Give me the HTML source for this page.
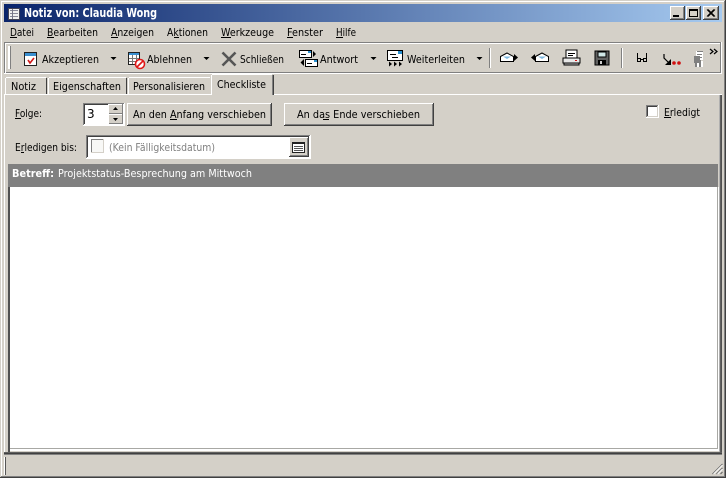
<!DOCTYPE html>
<html><head><meta charset="utf-8"><style>
html,body{margin:0;padding:0;background:#d4d0c8;width:726px;height:478px;overflow:hidden}
svg{display:block}
text{font-family:"DejaVu Sans","Liberation Sans",sans-serif;font-size:11px;fill:#000}
.c{shape-rendering:crispEdges}
</style></head><body>
<svg width="726" height="478" viewBox="0 0 726 478" xmlns="http://www.w3.org/2000/svg">
<defs><linearGradient id="g" x1="0" x2="1" y1="0" y2="0"><stop offset="0" stop-color="#0a246a"/><stop offset="1" stop-color="#a6caf0"/></linearGradient></defs>
<g class="c">
<rect width="726" height="478" fill="#d4d0c8"/>
<rect x="1" y="1" width="724" height="1" fill="#fff"/>
<rect x="1" y="1" width="1" height="476" fill="#fff"/>
<rect x="725" y="0" width="1" height="478" fill="#404040"/>
<rect x="724" y="1" width="1" height="476" fill="#808080"/>
<rect x="0" y="477" width="726" height="1" fill="#404040"/>
<rect x="1" y="476" width="724" height="1" fill="#808080"/>
<rect x="4" y="4" width="718" height="18" fill="url(#g)"/>
<!-- title icon -->
<rect x="8" y="8" width="12" height="12" fill="#f0f0f0"/>
<rect x="8" y="8" width="12" height="1" fill="#445"/><rect x="8" y="19" width="12" height="1" fill="#445"/>
<rect x="8" y="8" width="1" height="12" fill="#445"/><rect x="19" y="8" width="1" height="12" fill="#445"/>
<rect x="10" y="10" width="8" height="1" fill="#889"/><rect x="10" y="13" width="8" height="1" fill="#889"/><rect x="10" y="16" width="8" height="1" fill="#889"/>
<rect x="12" y="9" width="1" height="10" fill="#778"/>
<!-- window buttons -->
<rect x="670" y="6" width="15" height="14" fill="#404040"/><rect x="670" y="6" width="14" height="13" fill="#fff"/><rect x="671" y="7" width="13" height="12" fill="#808080"/><rect x="671" y="7" width="12" height="11" fill="#d4d0c8"/>
<rect x="673" y="15" width="6" height="2" fill="#000"/>
<rect x="686" y="6" width="15" height="14" fill="#404040"/><rect x="686" y="6" width="14" height="13" fill="#fff"/><rect x="687" y="7" width="13" height="12" fill="#808080"/><rect x="687" y="7" width="12" height="11" fill="#d4d0c8"/>
<rect x="689" y="9" width="9" height="2" fill="#000"/><rect x="689" y="9" width="1" height="8" fill="#000"/><rect x="697" y="9" width="1" height="8" fill="#000"/><rect x="689" y="16" width="9" height="1" fill="#000"/>
<rect x="703" y="6" width="16" height="14" fill="#404040"/><rect x="703" y="6" width="15" height="13" fill="#fff"/><rect x="704" y="7" width="14" height="12" fill="#808080"/><rect x="704" y="7" width="13" height="11" fill="#d4d0c8"/>
</g>
<path d="M707 9.500l7 7M708 9.500l7 7M714 9.500l-7 7M715 9.500l-7 7" stroke="#000" fill="none"/>
<text x="24" y="17" style="fill:#fff;font-size:12px;font-weight:bold" textLength="133" lengthAdjust="spacingAndGlyphs">Notiz von: Claudia Wong</text>

<!-- menu -->
<text x="10" y="36" textLength="24" lengthAdjust="spacingAndGlyphs">Datei</text>
<text x="47" y="36" textLength="51" lengthAdjust="spacingAndGlyphs">Bearbeiten</text>
<text x="111" y="36" textLength="43" lengthAdjust="spacingAndGlyphs">Anzeigen</text>
<text x="167" y="36" textLength="41" lengthAdjust="spacingAndGlyphs">Aktionen</text>
<text x="221" y="36" textLength="53" lengthAdjust="spacingAndGlyphs">Werkzeuge</text>
<text x="287" y="36" textLength="36" lengthAdjust="spacingAndGlyphs">Fenster</text>
<text x="336" y="36" textLength="20" lengthAdjust="spacingAndGlyphs">Hilfe</text>
<g class="c" fill="#000">
<rect x="10" y="37" width="7" height="1"/><rect x="47" y="37" width="7" height="1"/><rect x="111" y="37" width="7" height="1"/><rect x="174" y="37" width="5" height="1"/><rect x="221" y="37" width="10" height="1"/><rect x="287" y="37" width="6" height="1"/><rect x="336" y="37" width="7" height="1"/>
<!-- toolbar frame -->
<rect x="4" y="42" width="718" height="1" fill="#808080"/><rect x="4" y="43" width="718" height="1" fill="#fff"/>
<rect x="4" y="72" width="718" height="1" fill="#808080"/><rect x="4" y="73" width="718" height="1" fill="#fff"/>
<rect x="4" y="42" width="1" height="31" fill="#808080"/><rect x="5" y="43" width="1" height="30" fill="#fff"/>
<rect x="720" y="42" width="1" height="31" fill="#808080"/><rect x="721" y="42" width="1" height="32" fill="#fff"/>
<rect x="8" y="46" width="2" height="23" fill="#fff"/><rect x="10" y="46" width="1" height="23" fill="#808080"/>
<rect x="489" y="48" width="1" height="20" fill="#808080"/><rect x="490" y="48" width="1" height="20" fill="#fff"/>
<rect x="621" y="48" width="1" height="20" fill="#808080"/><rect x="622" y="48" width="1" height="20" fill="#fff"/>
<!-- accept icon -->
<rect x="24" y="52" width="13" height="14" fill="#fff"/><rect x="24" y="52" width="13" height="4" fill="#3a8fd0"/>
<rect x="24" y="52" width="13" height="1" fill="#222"/><rect x="24" y="65" width="13" height="1" fill="#222"/><rect x="24" y="52" width="1" height="14" fill="#222"/><rect x="36" y="52" width="1" height="14" fill="#222"/>
<!-- decline icon -->
<rect x="128" y="52" width="12" height="13" fill="#fff"/><rect x="128" y="52" width="12" height="3" fill="#3a8fd0"/>
<rect x="128" y="52" width="12" height="1" fill="#222"/><rect x="128" y="64" width="12" height="1" fill="#222"/><rect x="128" y="52" width="1" height="13" fill="#222"/><rect x="139" y="52" width="1" height="13" fill="#222"/>
<rect x="132" y="55" width="1" height="9" fill="#777"/><rect x="136" y="55" width="1" height="9" fill="#777"/><rect x="129" y="58" width="10" height="1" fill="#777"/><rect x="129" y="61" width="10" height="1" fill="#777"/>
</g>
<path d="M28 60l2 3 4-5" stroke="#d01818" stroke-width="1.600" fill="none"/>
<circle cx="140" cy="64" r="4.500" fill="#fff" stroke="#e01818" stroke-width="1.600"/><path d="M137 67l6-6" stroke="#e01818" stroke-width="1.600"/>
<text x="42" y="63" textLength="57" lengthAdjust="spacingAndGlyphs">Akzeptieren</text>
<text x="147" y="63" textLength="45" lengthAdjust="spacingAndGlyphs">Ablehnen</text>
<text x="240" y="63" textLength="44" lengthAdjust="spacingAndGlyphs">Schließen</text>
<text x="320" y="63" textLength="38" lengthAdjust="spacingAndGlyphs">Antwort</text>
<text x="407" y="63" textLength="58" lengthAdjust="spacingAndGlyphs">Weiterleiten</text>
<!-- arrows -->
<path d="M110.500 57h6l-3 3zM203.500 57h6l-3 3zM370.500 57h6l-3 3zM476.500 57h6l-3 3z" fill="#000"/>
<!-- X -->
<path d="M222.500 52.500l13 13M235.500 52.500l-13 13" stroke="#555" stroke-width="2.600" fill="none"/>
<!-- reply / forward icons -->
<g class="c">
<rect x="299.500" y="50.500" width="12" height="7" fill="#fff" stroke="#000"/><rect x="308" y="51" width="3" height="2" fill="#2a90d0"/><rect x="301" y="54" width="5" height="1" fill="#000"/>
<rect x="305.500" y="59.500" width="12" height="7" fill="#fff" stroke="#000"/><rect x="314" y="60" width="3" height="2" fill="#2a90d0"/><rect x="307" y="63" width="5" height="1" fill="#000"/>
<rect x="387.500" y="50.500" width="15" height="10" fill="#fff" stroke="#000"/><rect x="398" y="51" width="4" height="3" fill="#2a90d0"/><rect x="390" y="54" width="6" height="1" fill="#000"/><rect x="392" y="57" width="6" height="1" fill="#000"/>
</g>
<path d="M313 51l3 3-3 3zM304 59l-3.500 3.500 3.500 3.500zM389 61.500l3 2.500-3 2.500zM394 61.500l3 2.500-3 2.500zM399 61.500l3 2.500-3 2.500z" fill="#000"/>
<!-- open envelopes -->
<path d="M500.500 56.500L507 53l6.500 3.500v5h-13z" fill="#fff" stroke="#000"/><path d="M503 56.500h8l-4 2.500z" fill="#7fb9e0"/><path d="M514 54l4 3.500-4 3.500z" fill="#000"/>
<path d="M535.500 56.500L542 53l6.500 3.500v5h-13z" fill="#fff" stroke="#000"/><path d="M538 56.500h8l-4 2.500z" fill="#7fb9e0"/><path d="M535 54l-4 3.500 4 3.500z" fill="#000"/>
<!-- printer / floppy -->
<g class="c">
<rect x="566" y="50" width="11" height="9" fill="#fff" stroke="#000"/><rect x="568" y="53" width="7" height="1" fill="#000"/><rect x="568" y="55" width="5" height="1" fill="#000"/>
<rect x="563" y="58" width="17" height="5" fill="#e8e8e8" stroke="#000"/><rect x="564" y="63" width="15" height="2" fill="#bbb" stroke="#000"/><rect x="575" y="60" width="2" height="1" fill="#d01818"/>
<rect x="595" y="51" width="14" height="14" fill="#606060" stroke="#000"/><rect x="598" y="52" width="8" height="5" fill="#cfe6e6" stroke="#000"/><rect x="598" y="60" width="8" height="5" fill="#000"/><rect x="600" y="61" width="2" height="3" fill="#ccc"/>
</g>
<!-- glasses -->
<g class="c" fill="#000"><rect x="637" y="53" width="1" height="9"/><rect x="640" y="58" width="1" height="4"/><rect x="637" y="61" width="4" height="1"/><rect x="637" y="58" width="4" height="1"/>
<rect x="641" y="59" width="2" height="1"/>
<rect x="646" y="53" width="1" height="9"/><rect x="643" y="58" width="1" height="4"/><rect x="643" y="61" width="4" height="1"/><rect x="643" y="58" width="4" height="1"/></g>
<!-- arrow with dots -->
<path d="M664 54v4l5 5" stroke="#000" stroke-width="1.200" fill="none"/><path d="M665 65h6v-6z" fill="#000"/>
<circle cx="674" cy="63" r="1.800" fill="#d01010"/><circle cx="679" cy="63" r="1.800" fill="#d01010"/>
<!-- disabled figure -->
<g class="c"><rect x="696" y="51" width="7" height="9" fill="#fff"/><rect x="697" y="51" width="6" height="1" fill="#808080"/><rect x="697" y="54" width="5" height="1" fill="#808080"/><rect x="697" y="57" width="5" height="1" fill="#808080"/><rect x="694" y="56" width="6" height="7" fill="#808080"/><rect x="695" y="63" width="2" height="4" fill="#808080"/><rect x="697" y="63" width="2" height="4" fill="#fff"/><rect x="699" y="60" width="2" height="7" fill="#808080"/><rect x="701" y="61" width="2" height="6" fill="#fff"/></g>
<path d="M710 49l3 2.500-3 2.500M714 49l3 2.500-3 2.500" stroke="#000" stroke-width="1.200" fill="none"/>

<!-- tabs -->
<g class="c">
<rect x="4" y="94" width="718" height="1" fill="#fff"/>
<rect x="5" y="78" width="1" height="16" fill="#fff"/><rect x="6" y="77" width="40" height="1" fill="#fff"/><rect x="46" y="78" width="1" height="16" fill="#404040"/>
<rect x="48" y="78" width="1" height="16" fill="#fff"/><rect x="49" y="77" width="77" height="1" fill="#fff"/><rect x="126" y="78" width="1" height="16" fill="#404040"/>
<rect x="128" y="78" width="1" height="16" fill="#fff"/><rect x="129" y="77" width="81" height="1" fill="#fff"/>
<rect x="211" y="75" width="1" height="20" fill="#fff"/><rect x="212" y="74" width="60" height="1" fill="#fff"/><rect x="272" y="75" width="1" height="20" fill="#808080"/><rect x="273" y="75" width="1" height="20" fill="#404040"/>
<rect x="212" y="94" width="60" height="2" fill="#d4d0c8"/>
<!-- panel sides -->
<rect x="4" y="95" width="1" height="360" fill="#fff"/>
<rect x="720" y="95" width="1" height="360" fill="#606060"/>
<rect x="721" y="95" width="1" height="360" fill="#505050"/>
<rect x="719" y="95" width="1" height="360" fill="#b0b0b0"/>
</g>
<text x="11" y="90" textLength="25" lengthAdjust="spacingAndGlyphs">Notiz</text>
<text x="53" y="90" textLength="68" lengthAdjust="spacingAndGlyphs">Eigenschaften</text>
<text x="133" y="90" textLength="72" lengthAdjust="spacingAndGlyphs">Personalisieren</text>
<text x="217" y="88" textLength="49" lengthAdjust="spacingAndGlyphs">Checkliste</text>

<!-- row 1 -->
<text x="15" y="117" textLength="27" lengthAdjust="spacingAndGlyphs">Folge:</text>
<g class="c">
<rect x="15" y="118" width="6" height="1" fill="#000"/>
<rect x="83" y="103" width="42" height="23" fill="#fff"/><rect x="83" y="103" width="41" height="22" fill="#808080"/><rect x="84" y="104" width="40" height="21" fill="#fff"/><rect x="84" y="104" width="39" height="20" fill="#404040"/><rect x="85" y="105" width="38" height="19" fill="#fff"/>
<rect x="108" y="104" width="15" height="10" fill="#d4d0c8"/><rect x="108" y="114" width="15" height="10" fill="#d4d0c8"/>
<rect x="108" y="113" width="15" height="1" fill="#808080"/><rect x="108" y="123" width="15" height="1" fill="#808080"/><rect x="122" y="104" width="1" height="20" fill="#808080"/>
<rect x="108" y="104" width="14" height="1" fill="#fff"/><rect x="108" y="114" width="14" height="1" fill="#fff"/><rect x="108" y="104" width="1" height="20" fill="#fff"/>
<!-- buttons -->
<rect x="127" y="103" width="145" height="23" fill="#404040"/><rect x="127" y="103" width="144" height="22" fill="#fff"/><rect x="128" y="104" width="143" height="21" fill="#808080"/><rect x="128" y="104" width="142" height="20" fill="#d4d0c8"/>
<rect x="284" y="103" width="150" height="23" fill="#404040"/><rect x="284" y="103" width="149" height="22" fill="#fff"/><rect x="285" y="104" width="148" height="21" fill="#808080"/><rect x="285" y="104" width="147" height="20" fill="#d4d0c8"/>
<rect x="170" y="119" width="7" height="1" fill="#000"/><rect x="323" y="119" width="6" height="1" fill="#000"/>
<!-- checkbox -->
<rect x="646" y="105" width="13" height="13" fill="#fff"/><rect x="646" y="105" width="12" height="12" fill="#808080"/><rect x="647" y="106" width="11" height="11" fill="#d4d0c8"/><rect x="647" y="106" width="10" height="10" fill="#404040"/><rect x="648" y="107" width="9" height="9" fill="#fff"/>
<rect x="664" y="117" width="7" height="1" fill="#000"/>
</g>
<path d="M113 110h5l-2.500-3zM113 118h5l-2.500 3z" fill="#000"/>
<text x="87" y="118" style="font-size:12px">3</text>
<text x="133" y="118" textLength="133" lengthAdjust="spacingAndGlyphs">An den Anfang verschieben</text>
<text x="297" y="118" textLength="123" lengthAdjust="spacingAndGlyphs">An das Ende verschieben</text>
<text x="664" y="116" textLength="36" lengthAdjust="spacingAndGlyphs">Erledigt</text>

<!-- row 2 -->
<text x="15" y="151" textLength="62" lengthAdjust="spacingAndGlyphs">Erledigen bis:</text>
<g class="c">
<rect x="21" y="152" width="3" height="1" fill="#000"/>
<rect x="86" y="135" width="225" height="24" fill="#fff"/><rect x="86" y="135" width="224" height="23" fill="#808080"/><rect x="87" y="136" width="223" height="22" fill="#fff"/><rect x="87" y="136" width="222" height="21" fill="#404040"/><rect x="88" y="137" width="221" height="20" fill="#fff"/>
<rect x="91" y="139" width="13" height="14" fill="#fff"/>
<rect x="91" y="139" width="13" height="1" fill="#808080"/><rect x="91" y="139" width="1" height="14" fill="#808080"/><rect x="91" y="152" width="13" height="1" fill="#d4d0c8"/><rect x="103" y="139" width="1" height="14" fill="#d4d0c8"/><rect x="92" y="140" width="11" height="12" fill="#f8f8f6"/>
<rect x="289" y="137" width="20" height="20" fill="#d4d0c8"/><rect x="289" y="137" width="19" height="1" fill="#fff"/><rect x="289" y="137" width="1" height="19" fill="#fff"/><rect x="289" y="156" width="20" height="1" fill="#404040"/><rect x="308" y="137" width="1" height="20" fill="#404040"/><rect x="290" y="155" width="18" height="1" fill="#808080"/><rect x="307" y="138" width="1" height="18" fill="#808080"/>
<rect x="292" y="142" width="13" height="10" fill="#fff"/><rect x="292" y="142" width="13" height="2" fill="#222"/><rect x="292" y="144" width="1" height="8" fill="#222"/><rect x="304" y="144" width="1" height="8" fill="#222"/><rect x="292" y="152" width="13" height="1" fill="#222"/>
<rect x="294" y="146" width="9" height="1" fill="#555"/><rect x="294" y="148" width="9" height="1" fill="#555"/><rect x="294" y="150" width="9" height="1" fill="#555"/>
<!-- subject -->
<rect x="8" y="164" width="710" height="23" fill="#808080"/>
<rect x="8" y="187" width="711" height="268" fill="#d4d0c8"/>
<rect x="8" y="187" width="2" height="266" fill="#505050"/>
<rect x="10" y="187" width="707" height="261" fill="#fff"/>
<rect x="10" y="448" width="709" height="1" fill="#a8a8a4"/>
<rect x="717" y="187" width="1" height="262" fill="#a8a8a4"/>
<rect x="10" y="449" width="709" height="2" fill="#fff"/>
<rect x="718" y="187" width="1" height="264" fill="#fff"/>
<rect x="4" y="452" width="718" height="1" fill="#606060"/>
<rect x="4" y="453" width="718" height="1" fill="#404040"/>
<rect x="4" y="454" width="718" height="1" fill="#808080"/>
<!-- status bar -->
<rect x="4" y="457" width="1" height="18" fill="#fff"/><rect x="5" y="457" width="1" height="18" fill="#555"/>
</g>
<text x="109" y="151" textLength="106" lengthAdjust="spacingAndGlyphs" style="fill:#808080">(Kein Fälligkeitsdatum)</text>
<text x="12" y="177" textLength="42" lengthAdjust="spacingAndGlyphs" style="fill:#fff;font-weight:bold">Betreff:</text>
<text x="58" y="177" textLength="194" lengthAdjust="spacingAndGlyphs" style="fill:#fff">Projektstatus-Besprechung am Mittwoch</text>
<!-- grip -->
<path d="M712.500 474l10-10M716.500 474l6-6M720.500 474l2-2" stroke="#606060" fill="none"/>
<path d="M713.500 474l9-9M717.500 474l5-5" stroke="#fff" fill="none"/>
</svg>
</body></html>
